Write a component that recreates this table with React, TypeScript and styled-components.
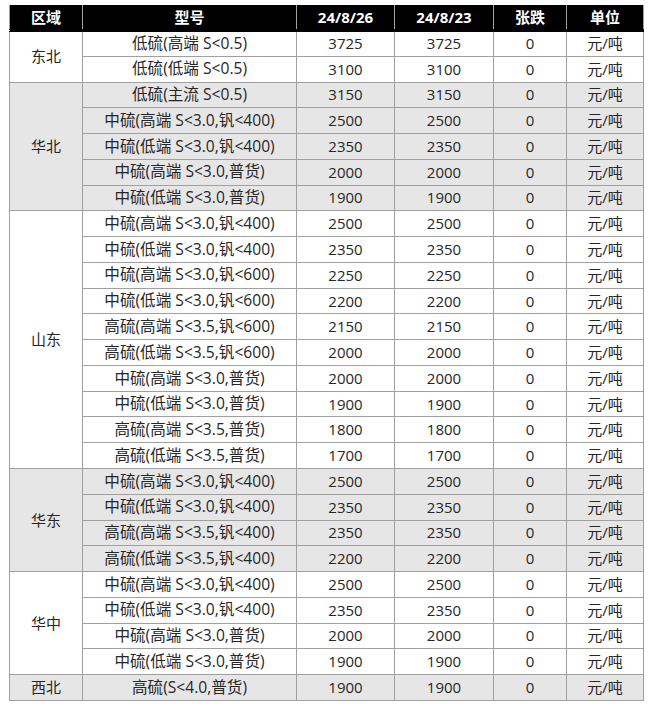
import { FunctionComponent } from 'react';
import styled, { createGlobalStyle } from 'styled-components';

type Row = { model: string; cur: number; prev: number };
type Group = { region: string; shaded: boolean; rows: Row[] };

const groups: Group[] = [
  {
    region: '东北',
    shaded: false,
    rows: [
      { model: '低硫(高端 S<0.5)', cur: 3725, prev: 3725 },
      { model: '低硫(低端 S<0.5)', cur: 3100, prev: 3100 },
    ],
  },
  {
    region: '华北',
    shaded: true,
    rows: [
      { model: '低硫(主流 S<0.5)', cur: 3150, prev: 3150 },
      { model: '中硫(高端 S<3.0,钒<400)', cur: 2500, prev: 2500 },
      { model: '中硫(低端 S<3.0,钒<400)', cur: 2350, prev: 2350 },
      { model: '中硫(高端 S<3.0,普货)', cur: 2000, prev: 2000 },
      { model: '中硫(低端 S<3.0,普货)', cur: 1900, prev: 1900 },
    ],
  },
  {
    region: '山东',
    shaded: false,
    rows: [
      { model: '中硫(高端 S<3.0,钒<400)', cur: 2500, prev: 2500 },
      { model: '中硫(低端 S<3.0,钒<400)', cur: 2350, prev: 2350 },
      { model: '中硫(高端 S<3.0,钒<600)', cur: 2250, prev: 2250 },
      { model: '中硫(低端 S<3.0,钒<600)', cur: 2200, prev: 2200 },
      { model: '高硫(高端 S<3.5,钒<600)', cur: 2150, prev: 2150 },
      { model: '高硫(低端 S<3.5,钒<600)', cur: 2000, prev: 2000 },
      { model: '中硫(高端 S<3.0,普货)', cur: 2000, prev: 2000 },
      { model: '中硫(低端 S<3.0,普货)', cur: 1900, prev: 1900 },
      { model: '高硫(高端 S<3.5,普货)', cur: 1800, prev: 1800 },
      { model: '高硫(低端 S<3.5,普货)', cur: 1700, prev: 1700 },
    ],
  },
  {
    region: '华东',
    shaded: true,
    rows: [
      { model: '中硫(高端 S<3.0,钒<400)', cur: 2500, prev: 2500 },
      { model: '中硫(低端 S<3.0,钒<400)', cur: 2350, prev: 2350 },
      { model: '高硫(高端 S<3.5,钒<400)', cur: 2350, prev: 2350 },
      { model: '高硫(低端 S<3.5,钒<400)', cur: 2200, prev: 2200 },
    ],
  },
  {
    region: '华中',
    shaded: false,
    rows: [
      { model: '中硫(高端 S<3.0,钒<400)', cur: 2500, prev: 2500 },
      { model: '中硫(低端 S<3.0,钒<400)', cur: 2350, prev: 2350 },
      { model: '中硫(高端 S<3.0,普货)', cur: 2000, prev: 2000 },
      { model: '中硫(低端 S<3.0,普货)', cur: 1900, prev: 1900 },
    ],
  },
  {
    region: '西北',
    shaded: true,
    rows: [{ model: '高硫(S<4.0,普货)', cur: 1900, prev: 1900 }],
  },
];

const columns = [
  { title: '区域', width: 73 },
  { title: '型号', width: 214 },
  { title: '24/8/26', width: 98 },
  { title: '24/8/23', width: 99 },
  { title: '张跌', width: 73 },
  { title: '单位', width: 77 },
];

const App: FunctionComponent = () => (
  <>
    <GlobalStyle />
    <Page>
      <PriceTable>
        <colgroup>
          {columns.map((c) => (
            <col key={c.title} style={{ width: c.width }} />
          ))}
        </colgroup>
        <thead>
          <tr>
            {columns.map((c) => (
              <HeadCell key={c.title}>{c.title}</HeadCell>
            ))}
          </tr>
        </thead>
        <tbody>
          {groups.map((g) =>
            g.rows.map((r, i) => (
              <BodyRow key={g.region + i} $shaded={g.shaded}>
                {i === 0 && <Cell rowSpan={g.rows.length}>{g.region}</Cell>}
                <ModelCell>{r.model}</ModelCell>
                <Cell>{r.cur}</Cell>
                <Cell>{r.prev}</Cell>
                <Cell>{r.cur - r.prev}</Cell>
                <Cell>元/吨</Cell>
              </BodyRow>
            ))
          )}
        </tbody>
      </PriceTable>
    </Page>
  </>
);

export default App;

const GlobalStyle = createGlobalStyle`
  body {
    margin: 0;
    background: #fff;
    font-family: "Open Sans", "Noto Sans CJK SC", sans-serif;
  }
`;

const Page = styled.div`
  padding: 5px 0 0 9px;
`;

const PriceTable = styled.table`
  width: 634px;
  table-layout: fixed;
  border-collapse: collapse;
  border: 1px solid #000;
`;

const HeadCell = styled.th`
  height: 23px;
  padding: 0;
  background: #000;
  color: #fff;
  font-size: 15px;
  font-weight: 700;
  text-align: center;
  border-left: 1px solid #a0a0a0;
  border-right: 1px solid #a0a0a0;
  border-bottom: 3px double #000;
  line-height: 1;
`;

const BodyRow = styled.tr<{ $shaded: boolean }>`
  height: 25.77px;
  background: ${(p) => (p.$shaded ? '#e7e6e6' : '#fff')};
`;

const Cell = styled.td`
  padding: 0;
  border: 1px solid #a0a0a0;
  text-align: center;
  vertical-align: middle;
  font-size: 15px;
  color: #262626;
  line-height: 1;
  white-space: nowrap;
`;

const ModelCell = styled(Cell)`
  font-size: 15.6px;
`;
